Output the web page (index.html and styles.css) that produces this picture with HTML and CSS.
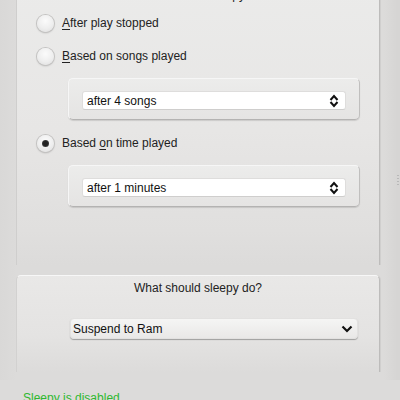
FILE: index.html
```html
<!DOCTYPE html>
<html>
<head>
<meta charset="utf-8">
<link rel="stylesheet" href="styles.css">
</head>
<body>
<div class="page">
  <div class="group group-first">
    <div class="group-title">When should sleepy act?</div>
    <div class="radio-row row-1">
      <span class="radio"></span>
      <span class="label"><u>A</u>fter play stopped</span>
    </div>
    <div class="radio-row row-2">
      <span class="radio"></span>
      <span class="label"><u>B</u>ased on songs played</span>
    </div>
    <div class="frame">
      <div class="spin">
        <span class="spin-text">after 4 songs</span>
        <svg class="spin-icon" width="10" height="14" viewBox="0 0 10 14"><path d="M1.5 6 L5 2 L8.5 6 M1.5 8 L5 12 L8.5 8" fill="none" stroke="#111" stroke-width="2"/></svg>
      </div>
    </div>
    <div class="radio-row row-3">
      <span class="radio checked"></span>
      <span class="label">Based <u>o</u>n time played</span>
    </div>
    <div class="frame">
      <div class="spin">
        <span class="spin-text">after 1 minutes</span>
        <svg class="spin-icon" width="10" height="14" viewBox="0 0 10 14"><path d="M1.5 6 L5 2 L8.5 6 M1.5 8 L5 12 L8.5 8" fill="none" stroke="#111" stroke-width="2"/></svg>
      </div>
    </div>
  </div>

  <div class="group group-second">
    <div class="group-title">What should sleepy do?</div>
    <div class="combo">
      <span class="combo-text">Suspend to Ram</span>
      <svg class="combo-icon" width="12" height="8" viewBox="0 0 12 8"><path d="M1.5 1.5 L6 6 L10.5 1.5" fill="none" stroke="#111" stroke-width="2.2"/></svg>
    </div>
  </div>

  <div class="status">Sleepy is disabled.</div>
  <div class="grip"></div>
</div>
</body>
</html>
```

FILE: styles.css
```css
* { box-sizing: border-box; }
html, body {
  margin: 0;
  padding: 0;
  width: 400px;
  height: 400px;
  overflow: hidden;
  background: #dcdbda;
}
body {
  font-family: "Liberation Sans", Arial, sans-serif;
  font-size: 12px;
  color: #222;
}
.page {
  position: relative;
  width: 400px;
  height: 400px;
  background: linear-gradient(to right, #d9d8d7 0px, #dcdbda 16px, #dcdbda 384px, #d6d5d4 397px);
}
u { text-decoration: underline; text-underline-offset: 2px; }

.group {
  margin-left: 16px;
  width: 364px;
  border-left: 1px solid #c9c8c7;
  border-right: 1px solid #bdbcbb;
  border-radius: 5px 5px 0 0;
  box-shadow: 1px 0 0 #d0cfce;
}
.group-first {
  margin-top: -20px;
  padding-bottom: 58px;
  background: linear-gradient(to bottom, #ebebea 0px, #e7e6e5 150px, #e0dfde 250px, #dcdbda 285px);
  border-left-color: #cfcecd;
}
.group-title {
  height: 16px;
  line-height: 16px;
  text-align: center;
}
.group-first .group-title {
  height: 20px;
  line-height: 14px;
  padding-top: 8px;
  padding-left: 12px;
}

.radio-row {
  display: flex;
  align-items: center;
  height: 20px;
  margin-top: 13px;
  padding-left: 20px;
}
.radio {
  width: 17px;
  height: 17px;
  border-radius: 50%;
  flex: none;
  background: radial-gradient(circle at 50% 35%, #fbfbfb 0%, #eeeeee 55%, #dcdcdc 100%);
  box-shadow: 0 0 0 1px #c4c3c2, 0 1px 2px rgba(0,0,0,0.25);
  margin-right: 8px;
  position: relative;
}
.radio.checked::after {
  content: "";
  position: absolute;
  left: 5px;
  top: 5px;
  width: 7px;
  height: 7px;
  border-radius: 50%;
  background: radial-gradient(circle, #222 40%, #555 100%);
}
.label { line-height: 16px; color: #222; }

.frame {
  margin-top: 12px;
  margin-left: 51px;
  width: 292px;
  height: 42px;
  border-radius: 5px;
  background: linear-gradient(to bottom, #ececeb, #e5e4e3);
  border: 1px solid #f6f6f6;
  border-right-color: #c0bfbe;
  border-bottom-color: #b4b3b2;
  box-shadow: 0 1px 1px rgba(0,0,0,0.12);
  padding: 12px 13px 0 13px;
}
.spin {
  height: 19px;
  background: #ffffff;
  border-radius: 3px;
  border: 1px solid #dedddc;
  border-bottom-color: #cfcecd;
  display: flex;
  align-items: center;
  padding-left: 4px;
  padding-right: 6px;
}
.spin-text { flex: 1; color: #111; }
.spin-icon { flex: none; }

.group-second {
  margin-top: 10px;
  height: 97px;
  background: linear-gradient(to bottom, #e9e8e7 0px, #e4e3e2 60px, #dcdbda 97px);
  border-top: 1px solid #f7f7f7;
  border-left-color: #d2d1d0;
  padding-top: 4px;
}
.combo {
  margin-top: 22px;
  margin-left: 53px;
  width: 288px;
  height: 21px;
  border-radius: 4px;
  background: linear-gradient(to bottom, #f5f5f4, #e9e8e7);
  border: 1px solid #e2e1e0;
  box-shadow: 0 1px 1px rgba(0,0,0,0.3);
  display: flex;
  align-items: center;
  padding-left: 2px;
  padding-right: 4px;
}
.combo-text { flex: 1; color: #111; }
.combo-icon { flex: none; }

.status {
  margin-top: 18px;
  margin-left: 23px;
  color: #2fb82f;
  line-height: 16px;
}
.grip {
  position: absolute;
  left: 397px;
  top: 195px;
  width: 2px;
  height: 12px;
  background: repeating-linear-gradient(to bottom, #b8b8b8 0 1px, transparent 1px 3px);
}
```
